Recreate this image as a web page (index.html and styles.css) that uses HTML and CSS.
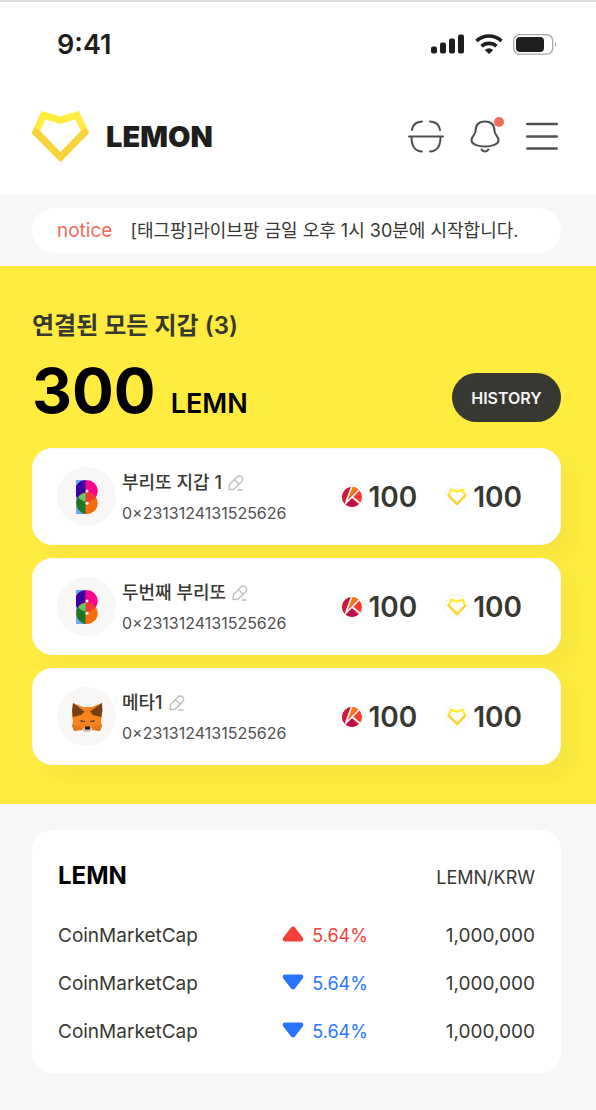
FILE: index.html
```html
<!DOCTYPE html>
<html lang="ko">
<head>
    <meta charset="UTF-8">
    <meta name="viewport" content="width=device-width, initial-scale=1.0">
    <title>LEMON</title>
    <link rel="stylesheet" href="styles.css">
</head>
<body>
    <!-- shared icons -->
    <svg class="sprite" aria-hidden="true">
        <symbol id="lemon" viewBox="0 0 59 53">
            <path fill="#ffec3f" fill-rule="evenodd" d="M10.500 1L29.500 6.500L48 1L58 23L29.500 52L.5 23ZM14.500 9.500L9 21L29.500 42L50 21L44.500 9.500L29.500 14Z"/>
            <path fill="#f9d33c" d="M4 17.500L.5 23L29.500 52L58 23L55 17.500L50 21L29.500 42.500L9 21Z"/>
        </symbol>
        <symbol id="klay" viewBox="0 0 20 20">
            <clipPath id="klay-clip"><circle cx="10" cy="10" r="10"/></clipPath>
            <g clip-path="url(#klay-clip)">
                <path fill="#fb3b30" d="M0 0h20v20H0z"/>
                <path fill="#f97a12" d="M9 0h9L6 12z"/>
                <path fill="#d0163c" d="M0 0h9L3 17H0z"/>
                <path fill="#c00a48" d="M10 11l8 9H1z"/>
                <path fill="none" stroke="#fff" stroke-width="1.600" d="M10-1L4 15M18 2L2 18M10 10l9 7"/>
            </g>
        </symbol>
        <symbol id="edit" viewBox="0 0 16 16">
            <g fill="none" stroke="#bfbfbf" stroke-width="1.400" stroke-linecap="round" stroke-linejoin="round">
                <path d="M1 14.500L1.500 9.500L9 2a3.300 3.300 0 0 1 4.700 0a3.300 3.300 0 0 1 0 4.700L6 14.200ZM6.500 4.500L11.200 9.200M10 15h4"/>
            </g>
        </symbol>
        <symbol id="burrito" viewBox="0 0 22 34">
            <clipPath id="top-ball"><circle cx="11" cy="11" r="10.700"/></clipPath>
            <path fill="#66aaf8" d="M0 0h11v34H0z"/>
            <circle cx="11" cy="11" r="10.700" fill="#ff008c"/>
            <path fill="#3d00a0" d="M9.500 .3v21.400a10.700 10.700 0 0 1 0-21.400z"/>
            <circle cx="11" cy="23.300" r="10.700" fill="#f66b0e"/>
            <path fill="#1f7626" d="M9.500 12.700v21.200a10.700 10.700 0 0 1 0-21.200z"/>
            <g clip-path="url(#top-ball)">
                <circle cx="11" cy="23.300" r="10.700" fill="#f33a35"/>
                <path fill="#5ccb62" d="M9.500 12.700v21.200a10.700 10.700 0 0 1 0-21.200z"/>
            </g>
            <circle cx="11" cy="11" r="1.500" fill="#fff"/>
            <circle cx="11" cy="23.300" r="1.500" fill="#fff"/>
        </symbol>
        <symbol id="fox" viewBox="0 0 32 30">
            <path fill="#f5841f" d="M2 1L12 5H21L31 1L31 14L30 19L31 24L29 29L21 27L18 30H14L11 27L3 29L1 24L2 19L1 14Z"/>
            <path fill="#763d16" d="M2 1L13.500 9.500L10 13L2 15L1 9ZM31 1L19 9.500L22 13L30 15L31.500 9Z"/>
            <path fill="#e2761b" d="M1 23l8 1 3 4-9 1zM31 23l-8 1-3 4 9 1z"/>
            <path fill="#d7c1b3" d="M11 27l3-2h5l3 2-4 3h-4z"/>
            <path fill="#161616" d="M14 24.500h5v3h-5z"/>
            <path fill="#5b4a32" d="M9 18l5 1v1h-4zM24 18l-5 1v1h4z"/>
        </symbol>
        <symbol id="arrow" viewBox="0 0 22 16">
            <path d="M9 1.500Q11-.5 13 1.500L21 12Q22 15.500 19 15.500H3Q0 15.500 1 12Z"/>
        </symbol>
    </svg>

    <header>
        <div class="status-bar">
            <span class="time">9:41</span>
            <div class="status-icons">
                <svg width="34" height="20" viewBox="0 0 34 20" fill="#1e1e1c">
                    <rect x="0" y="12.500" width="6" height="7" rx="2"/>
                    <rect x="9" y="8.500" width="6" height="11" rx="2"/>
                    <rect x="18" y="4.500" width="6" height="15" rx="2"/>
                    <rect x="27" y=".5" width="6" height="19" rx="2"/>
                </svg>
                <svg width="28" height="20" viewBox="0 0 28 20" fill="none" stroke="#1e1e1c" stroke-width="3.600">
                    <path d="M1.500 7A18 18 0 0 1 26.500 7M6.500 12.300A11 11 0 0 1 21.500 12.300"/>
                    <path fill="#1e1e1c" stroke="none" d="M14 20L9.800 15.900Q14 12.500 18.200 15.900Z"/>
                </svg>
                <svg width="44" height="21" viewBox="0 0 44 21">
                    <rect x=".7" y=".7" width="39" height="19.500" rx="6" fill="none" stroke="#a8a8a7" stroke-width="1.300"/>
                    <rect x="3" y="3" width="28" height="15" rx="4" fill="#1e1e1c"/>
                    <path d="M42 8q2.500 2.500 0 5z" fill="#a8a8a7"/>
                </svg>
            </div>
        </div>

        <div class="top-nav">
            <a href="#" class="brand">
                <svg width="59" height="53"><use href="#lemon"/></svg>
                LEMON
            </a>
            <nav>
                <button aria-label="Scan">
                    <svg width="36" height="34" viewBox="0 0 36 34" fill="none" stroke="#505050" stroke-width="2" stroke-linecap="round">
                        <path d="M1 17.500H35M4 11Q5 3 14 2.500M22 2.500Q31 3 32 11M3.500 18Q3.500 32 14 32.500M22 32.500Q32.500 32 32.500 18"/>
                    </svg>
                </button>
                <button class="bell" aria-label="Notifications">
                    <svg width="30" height="34" viewBox="0 0 30 34" fill="none" stroke="#505050" stroke-width="2" stroke-linecap="round">
                        <path d="M15 2.500C9 2.500 5.500 6 5.500 12C5.500 16 1.500 17 1.500 21.500C1.500 25 8 27.500 15 27.500S28.500 25 28.500 21.500C28.500 17 24.500 16 24.500 12C24.500 6 21 2.500 15 2.500ZM11.500 30.500Q15 34.500 18.500 30.500"/>
                    </svg>
                </button>
                <button aria-label="Menu">
                    <svg width="32" height="34" viewBox="0 0 32 34" stroke="#505050" stroke-width="2.400" stroke-linecap="round">
                        <path d="M1.200 5H30.800M1.200 17.500H30.800M1.200 29.500H30.800"/>
                    </svg>
                </button>
            </nav>
        </div>
    </header>

    <section class="notice">
        <a href="#" class="notice-pill">
            <span class="notice-label">notice</span>
            <span class="notice-text">[태그팡]라이브팡 금일 오후 1시 30분에 시작합니다.</span>
        </a>
    </section>

    <section class="wallets">
        <h1>연결된 모든 지갑 (3)</h1>
        <div class="total">
            <p><strong>300</strong><span>LEMN</span></p>
            <button class="history">HISTORY</button>
        </div>

        <div class="wallet-list">
            <article class="wallet">
                <div class="avatar"><svg width="22" height="34"><use href="#burrito"/></svg></div>
                <div class="wallet-info">
                    <h2>부리또 지갑 1 <button aria-label="Edit"><svg width="16" height="16"><use href="#edit"/></svg></button></h2>
                    <p>0×2313124131525626</p>
                </div>
                <div class="tokens">
                    <div class="token"><span class="coin"><svg width="20" height="20"><use href="#klay"/></svg></span>100</div>
                    <div class="token"><span class="coin"><svg width="20" height="18"><use href="#lemon"/></svg></span>100</div>
                </div>
            </article>
            <article class="wallet">
                <div class="avatar"><svg width="22" height="34"><use href="#burrito"/></svg></div>
                <div class="wallet-info">
                    <h2>두번째 부리또 <button aria-label="Edit"><svg width="16" height="16"><use href="#edit"/></svg></button></h2>
                    <p>0×2313124131525626</p>
                </div>
                <div class="tokens">
                    <div class="token"><span class="coin"><svg width="20" height="20"><use href="#klay"/></svg></span>100</div>
                    <div class="token"><span class="coin"><svg width="20" height="18"><use href="#lemon"/></svg></span>100</div>
                </div>
            </article>
            <article class="wallet">
                <div class="avatar"><svg width="32" height="30"><use href="#fox"/></svg></div>
                <div class="wallet-info">
                    <h2>메타1 <button aria-label="Edit"><svg width="16" height="16"><use href="#edit"/></svg></button></h2>
                    <p>0×2313124131525626</p>
                </div>
                <div class="tokens">
                    <div class="token"><span class="coin"><svg width="20" height="20"><use href="#klay"/></svg></span>100</div>
                    <div class="token"><span class="coin"><svg width="20" height="18"><use href="#lemon"/></svg></span>100</div>
                </div>
            </article>
        </div>
    </section>

    <section class="market">
        <div class="market-card">
            <div class="market-head">
                <h2>LEMN</h2>
                <span>LEMN/KRW</span>
            </div>
            <table>
                <tr>
                    <td>CoinMarketCap</td>
                    <td class="up"><svg width="22" height="16"><use href="#arrow"/></svg>5.64%</td>
                    <td class="price">1,000,000</td>
                </tr>
                <tr>
                    <td>CoinMarketCap</td>
                    <td class="down"><svg width="22" height="16"><use href="#arrow"/></svg>5.64%</td>
                    <td class="price">1,000,000</td>
                </tr>
                <tr>
                    <td>CoinMarketCap</td>
                    <td class="down"><svg width="22" height="16"><use href="#arrow"/></svg>5.64%</td>
                    <td class="price">1,000,000</td>
                </tr>
            </table>
        </div>
    </section>
</body>
</html>
```
FILE: styles.css
```css
* {
    box-sizing: border-box;
}
body {
    margin: 0;
    font-family: Inter, "Noto Sans CJK KR", sans-serif;
    font-size: 19px;
    color: #383832;
    background-color: #f8f7f5;
}
h1, h2, p {
    margin: 0;
}
button {
    padding: 0;
    border: none;
    background: none;
    font-family: inherit;
    cursor: pointer;
}
a {
    color: inherit;
    text-decoration: none;
}
svg {
    display: block;
}
.sprite {
    position: absolute;
    width: 0;
    height: 0;
}

/* header */
header {
    background-color: white;
    border-top: 2px solid #dcdcdc;
    padding-bottom: 32px;
}
.status-bar {
    display: flex;
    justify-content: space-between;
    align-items: center;
    height: 84px;
    padding: 0 39px 0 57px;
}
.time {
    font-size: 27px;
    font-weight: 600;
    color: #1e1e1c;
}
.status-icons {
    display: flex;
    align-items: center;
    gap: 10px;
}
.top-nav {
    display: flex;
    justify-content: space-between;
    align-items: center;
    padding: 24px 38px 0 31px;
}
.brand {
    display: flex;
    align-items: center;
    gap: 16px;
    font-size: 29px;
    font-weight: 900;
    color: #1e1e1c;
}
nav {
    display: flex;
    gap: 26px;
    margin-bottom: 2px;
}
.bell {
    position: relative;
}
.bell::after {
    content: "";
    position: absolute;
    top: -2px;
    right: -4px;
    width: 10px;
    height: 10px;
    border-radius: 50%;
    background-color: #f26a56;
}

/* notice */
.notice {
    padding: 13px 35px 13px 32px;
}
.notice-pill {
    display: flex;
    align-items: center;
    gap: 18px;
    height: 45px;
    padding: 0 25px;
    border-radius: 23px;
    background-color: white;
    white-space: nowrap;
}
.notice-label {
    color: #f26a56;
}
.notice-text {
    font-size: 18px;
    line-height: 24px;
}

/* wallets */
.wallets {
    padding: 44px 35px 39px 32px;
    background-color: #ffec3f;
}
h1 {
    font-size: 24px;
    line-height: 32px;
    font-weight: 600;
}
.total {
    display: flex;
    justify-content: space-between;
    align-items: flex-end;
    margin: 18px 0 26px;
    color: black;
}
.total p {
    line-height: 1;
}
.total strong {
    margin-right: 15px;
    font-size: 62px;
    line-height: 62px;
    font-weight: 700;
}
.total span {
    font-size: 27px;
    font-weight: 600;
}
.history {
    width: 109px;
    height: 49px;
    border-radius: 25px;
    background-color: #383832;
    color: #f8f7f5;
    font-size: 16px;
    font-weight: 600;
}
.wallet-list {
    display: flex;
    flex-direction: column;
    gap: 13px;
}
.wallet {
    display: flex;
    align-items: center;
    padding: 18px 38px 18px 24px;
    border-radius: 20px;
    border: 1px solid #f8f7f5;
    background-color: white;
    box-shadow: 13px 13px 19px rgba(56, 56, 50, 0.04);
}
.avatar {
    display: flex;
    align-items: center;
    justify-content: center;
    width: 59px;
    height: 59px;
    border-radius: 50%;
    background-color: #f8f7f5;
}
.wallet-info {
    margin-left: 6px;
}
.wallet-info h2 {
    display: flex;
    align-items: center;
    gap: 6px;
    font-size: 18px;
    line-height: 24px;
    font-weight: 500;
}
.wallet-info p {
    margin-top: 8px;
    font-size: 16px;
    line-height: 20px;
    color: #505050;
}
.tokens {
    display: flex;
    gap: 27px;
    margin-left: auto;
}
.token {
    display: flex;
    align-items: center;
    gap: 4px;
    font-size: 28px;
    font-weight: 600;
}
.coin {
    display: flex;
    align-items: center;
    justify-content: center;
    width: 25px;
    height: 25px;
    border: 1px solid #f5f5f5;
    border-radius: 50%;
}

/* market */
.market {
    padding: 26px 35px 37px 32px;
}
.market-card {
    padding: 30px 26px 18px;
    border-radius: 20px;
    background-color: white;
}
.market-head {
    display: flex;
    justify-content: space-between;
    align-items: baseline;
    height: 51px;
}
.market-head h2 {
    font-size: 24px;
    line-height: 32px;
    font-weight: 700;
    color: black;
}
.market-head span {
    font-size: 18px;
}
table {
    width: 100%;
    border-collapse: collapse;
}
td {
    height: 48px;
    padding: 0;
}
td:first-child {
    width: 47%;
}
.up, .down {
    font-size: 18px;
    color: #f33f3a;
}
.down {
    color: #2a75ff;
}
.up svg, .down svg {
    display: inline-block;
    margin-right: 8px;
    fill: currentColor;
}
.down svg {
    transform: rotate(180deg);
}
.price {
    text-align: right;
}
```
